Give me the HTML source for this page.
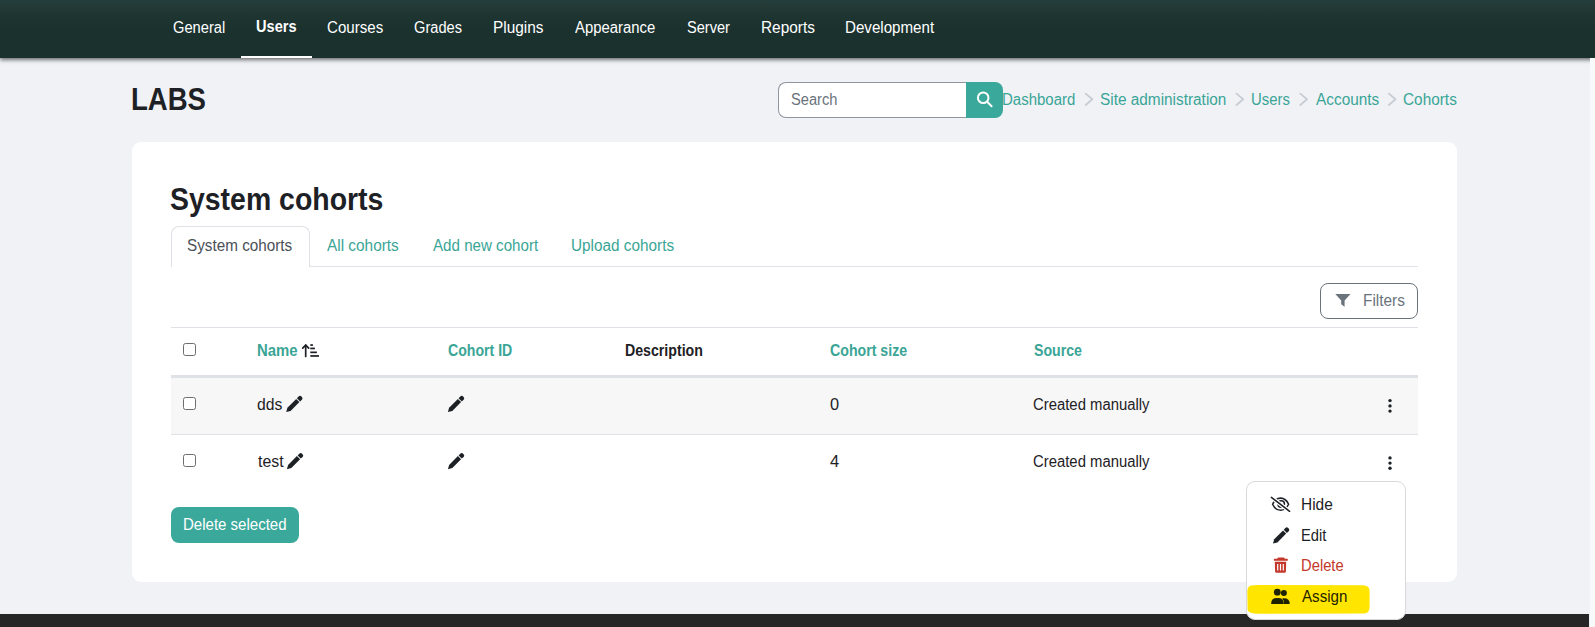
<!DOCTYPE html>
<html><head><meta charset="utf-8">
<style>
*{box-sizing:border-box;margin:0;padding:0}
html,body{width:1595px;height:627px;overflow:hidden}
body{background:#f1f2f6;font-family:"Liberation Sans",sans-serif;color:#1d2125;position:relative}
.t{position:absolute;white-space:nowrap;line-height:40px;transform-origin:0 0}
.b{position:absolute}
svg{position:absolute;overflow:visible}
</style></head>
<body>
<!-- navbar -->
<div class="b" style="left:0;top:0;width:1595px;height:58px;background:linear-gradient(#263e3b 0,#1e3532 14px,#1b312e 30px,#1b312e 58px);box-shadow:0 2px 4px rgba(0,0,0,.55)"></div>
<div class="b" style="left:241px;top:55.5px;width:71px;height:2.5px;background:#fff"></div>

<!-- search -->
<div class="b" style="left:778px;top:82px;width:189px;height:36px;background:#fff;border:1px solid #8f959e;border-right:none;border-radius:8px 0 0 8px"></div>
<div class="b" style="left:966px;top:82px;width:37px;height:36px;background:#3aa89b;border-radius:0 8px 8px 0"></div>
<svg style="left:966px;top:82px" width="37" height="36" viewBox="0 0 37 36">
  <circle cx="17.2" cy="15.8" r="5.3" fill="none" stroke="#fff" stroke-width="2"/>
  <line x1="21.2" y1="19.8" x2="25.6" y2="24.2" stroke="#fff" stroke-width="2" stroke-linecap="round"/>
</svg>
<!-- chevrons -->
<svg style="left:0;top:0" width="1595" height="130" viewBox="0 0 1595 130">
  <g fill="none" stroke="#c8ccd4" stroke-width="1.8" stroke-linecap="round" stroke-linejoin="round">
    <polyline points="1085.6,93.6 1092.3,99.3 1085.6,105"/>
    <polyline points="1236.5,93.6 1243.2,99.3 1236.5,105"/>
    <polyline points="1300.3,93.6 1307,99.3 1300.3,105"/>
    <polyline points="1388.8,93.6 1395.5,99.3 1388.8,105"/>
  </g>
</svg>

<!-- card -->
<div class="b" style="left:132px;top:142px;width:1325px;height:440px;background:#fff;border-radius:9px"></div>

<!-- tabs -->
<div class="b" style="left:171px;top:226px;width:139px;height:41px;background:#fff;border:1px solid #dee2e6;border-bottom:none;border-radius:8px 8px 0 0"></div>
<div class="b" style="left:309px;top:258px;width:1109px;height:9px;border-left:1px solid #dee2e6;border-bottom:1px solid #dee2e6;border-bottom-left-radius:2.5px;background:#fff"></div>

<!-- filters -->
<div class="b" style="left:1320px;top:283px;width:98px;height:36px;border:1px solid #6a737b;border-radius:8px"></div>
<svg style="left:1335px;top:294px" width="16" height="13" viewBox="0 0 16 13">
  <path d="M0.3,0 H15.5 L9.6,6.6 V12.8 L6.2,10.2 V6.6 Z" fill="#6a737b"/>
</svg>

<!-- table -->
<div class="b" style="left:171px;top:327px;width:1247px;height:1px;background:#dee2e6"></div>
<div class="b" style="left:171px;top:378px;width:1247px;height:56px;background:#f7f7f7"></div>
<div class="b" style="left:171px;top:375px;width:1247px;height:3px;background:#dee2e6"></div>
<div class="b" style="left:171px;top:434px;width:1247px;height:1px;background:#dee2e6"></div>

<div class="b" style="left:183px;top:343px;width:13px;height:13px;border:1px solid #6e6e6e;border-radius:2.5px;background:#fff"></div>
<div class="b" style="left:183px;top:397px;width:13px;height:13px;border:1px solid #6e6e6e;border-radius:2.5px;background:#fff"></div>
<div class="b" style="left:183px;top:454px;width:13px;height:13px;border:1px solid #6e6e6e;border-radius:2.5px;background:#fff"></div>

<!-- sort icon -->
<svg style="left:300px;top:342px" width="22" height="17" viewBox="0 0 22 17">
  <g fill="none" stroke="#1d2125" stroke-width="1.7" stroke-linecap="round" stroke-linejoin="round">
    <line x1="5.7" y1="3.2" x2="5.7" y2="14.4"/>
    <polyline points="2.7,6.2 5.7,3.1 8.7,6.2"/>
  </g>
  <g fill="#1d2125">
    <rect x="10.3" y="2.2" width="2.6" height="1.7"/>
    <rect x="10.3" y="5.6" width="4.6" height="1.7"/>
    <rect x="10.3" y="9.5" width="6.6" height="1.7"/>
    <rect x="10.3" y="13.1" width="8.7" height="1.7"/>
  </g>
</svg>

<!-- pencils -->
<svg style="left:0;top:0" width="1595" height="627" viewBox="0 0 1595 627">
  <defs>
    <g id="pen">
      <path d="M0.2,16.8 L1.4,12.4 L10.2,3.6 L13.4,6.8 L4.6,15.6 Z" />
      <path d="M10.9,2.9 L12.6,1.2 Q14,-0.2 15.4,1.2 L15.9,1.7 Q17.3,3.1 15.9,4.5 L14.1,6.1 Z" />
    </g>
  </defs>
  <g fill="#1d2125">
    <use href="#pen" x="286" y="395.3"/>
    <use href="#pen" x="447.7" y="395.3"/>
    <use href="#pen" x="286.7" y="452.5"/>
    <use href="#pen" x="447.7" y="452.5"/>
  </g>
  <!-- kebabs -->
  <g fill="#1d2125">
    <circle cx="1390" cy="400.6" r="1.7"/><circle cx="1390" cy="405.9" r="1.7"/><circle cx="1390" cy="411.1" r="1.7"/>
    <circle cx="1390" cy="457.9" r="1.7"/><circle cx="1390" cy="463.1" r="1.7"/><circle cx="1390" cy="468.3" r="1.7"/>
  </g>
</svg>

<!-- delete selected -->
<div class="b" style="left:171px;top:507px;width:128px;height:36px;background:#3aa89b;border-radius:8px"></div>

<!-- footer -->
<div class="b" style="left:0;top:613.5px;width:1589px;height:14px;background:#262626"></div>
<div class="b" style="left:1589.5px;top:58px;width:6px;height:569px;background:#f8f9fa"></div>

<!-- menu -->
<div class="b" style="left:1246px;top:481px;width:160px;height:139px;background:#fff;border:1px solid #d9d9d9;border-radius:9px"></div>
<!-- highlight -->
<svg style="left:1245px;top:583px" width="128" height="33" viewBox="0 0 128 33">
  <path d="M4,3.5 Q6,1.8 14,2 L118,2.3 Q124.5,2.5 124.6,8 L124.6,25 Q124.4,30.5 118,30.6 L14,30.8 Q4,31 2.6,27 L2.3,8 Q2.3,5 4,3.5 Z" fill="#ffe500"/>
</svg>
<svg style="left:1266px;top:490px" width="30" height="120" viewBox="0 0 30 120">
  <defs><g id="pen2"><path d="M0.2,16.8 L1.4,12.4 L10.2,3.6 L13.4,6.8 L4.6,15.6 Z" /><path d="M10.9,2.9 L12.6,1.2 Q14,-0.2 15.4,1.2 L15.9,1.7 Q17.3,3.1 15.9,4.5 L14.1,6.1 Z" /></g></defs>
  <use href="#pen2" x="6.8" y="36.8" fill="#1d2125"/>
  <!-- eye slash -->
  <g fill="none" stroke="#1d2125" stroke-width="1.55" stroke-linecap="round">
    <path d="M6.6,14.2 C8.6,9.8 11.5,8.1 14.6,8.1 C17.7,8.1 20.6,9.8 22.6,14.2 C20.6,18.6 17.7,20.3 14.6,20.3 C11.5,20.3 8.6,18.6 6.6,14.2 Z"/>
    <circle cx="15.2" cy="14" r="3.2"/>
    <line x1="5.4" y1="7.4" x2="23.6" y2="21.3" stroke="#fff" stroke-width="4"/>
    <line x1="5.4" y1="7.4" x2="23.6" y2="21.3"/>
  </g>
  <!-- trash -->
  <g fill="#c4382b">
    <path d="M11.4,68.2 Q11.6,67.4 12.5,67.4 H17.5 Q18.4,67.4 18.6,68.2 L18.8,68.8 H21.4 Q21.8,68.8 21.8,69.3 V70.3 Q21.8,70.8 21.4,70.8 H8.3 Q7.9,70.8 7.9,70.3 V69.3 Q7.9,68.8 8.3,68.8 H11.2 Z"/>
    <path d="M8.8,71.8 H20.2 L19.9,81.4 Q19.8,82.8 18.4,82.8 H10.6 Q9.2,82.8 9.1,81.4 Z M11.1,74 V80.6 H12.3 V74 Z M13.9,74 V80.6 H15.1 V74 Z M16.7,74 V80.6 H17.9 V74 Z" fill-rule="evenodd"/>
  </g>
  <!-- users -->
  <g fill="#1f2200">
    <circle cx="17.9" cy="102.9" r="3.0"/>
    <path d="M17.3,108.2 Q23.7,107.8 23.8,114.1 H17.9 Q18.4,110.6 16.2,108.6 Z"/>
    <circle cx="11.3" cy="102.2" r="3.4"/>
    <path d="M5.1,113.2 Q5.4,108 10.6,108 H12.3 Q17.5,108 17.8,113.2 Q17.8,114.1 16.9,114.1 H6 Q5.1,114.1 5.1,113.2 Z"/>
  </g>
</svg>

<div class="t" style="left:173.28px;top:8.0px;font-size:15.6px;color:#fff;transform:scaleX(0.9417)">General</div>
<div class="t" style="left:255.78px;top:7.0px;font-size:15.6px;font-weight:bold;color:#fff;transform:scaleX(0.9355)">Users</div>
<div class="t" style="left:327.03px;top:8.0px;font-size:15.6px;color:#fff;transform:scaleX(0.9676)">Courses</div>
<div class="t" style="left:414.38px;top:8.0px;font-size:15.6px;color:#fff;transform:scaleX(0.9384)">Grades</div>
<div class="t" style="left:493.47px;top:8.0px;font-size:15.6px;color:#fff;transform:scaleX(0.9880)">Plugins</div>
<div class="t" style="left:575.42px;top:8.0px;font-size:15.6px;color:#fff;transform:scaleX(0.9538)">Appearance</div>
<div class="t" style="left:686.92px;top:8.0px;font-size:15.6px;color:#fff;transform:scaleX(0.9359)">Server</div>
<div class="t" style="left:760.57px;top:8.0px;font-size:15.6px;color:#fff;transform:scaleX(0.9863)">Reports</div>
<div class="t" style="left:845.00px;top:8.0px;font-size:15.6px;color:#fff;transform:scaleX(0.9696)">Development</div>
<div class="t" style="left:131.46px;top:80.0px;font-size:31px;font-weight:bold;color:#1d2125;transform:scaleX(0.8886)">LABS</div>
<div class="t" style="left:790.62px;top:80.0px;font-size:15.6px;color:#6a737b;transform:scaleX(0.9402)">Search</div>
<div class="t" style="left:1002.31px;top:80.0px;font-size:15.6px;color:#3aa596;transform:scaleX(0.9617)">Dashboard</div>
<div class="t" style="left:1100.28px;top:80.0px;font-size:15.6px;color:#3aa596;transform:scaleX(0.9853)">Site administration</div>
<div class="t" style="left:1250.57px;top:80.0px;font-size:15.6px;color:#3aa596;transform:scaleX(0.9555)">Users</div>
<div class="t" style="left:1315.51px;top:80.0px;font-size:15.6px;color:#3aa596;transform:scaleX(0.9867)">Accounts</div>
<div class="t" style="left:1403.42px;top:80.0px;font-size:15.6px;color:#3aa596;transform:scaleX(0.9855)">Cohorts</div>
<div class="t" style="left:170.44px;top:179.0px;font-size:31.5px;font-weight:bold;color:#1d2125;transform:scaleX(0.9028)">System cohorts</div>
<div class="t" style="left:187.49px;top:226.0px;font-size:15.6px;color:#495057;transform:scaleX(0.9790)">System cohorts</div>
<div class="t" style="left:326.91px;top:226.0px;font-size:15.6px;color:#3aa596;transform:scaleX(0.9857)">All cohorts</div>
<div class="t" style="left:432.92px;top:226.0px;font-size:15.6px;color:#3aa596;transform:scaleX(0.9705)">Add new cohort</div>
<div class="t" style="left:571.14px;top:226.0px;font-size:15.6px;color:#3aa596;transform:scaleX(0.9832)">Upload cohorts</div>
<div class="t" style="left:1363.27px;top:281.0px;font-size:15.6px;color:#6a737b;transform:scaleX(0.9872)">Filters</div>
<div class="t" style="left:256.99px;top:331.0px;font-size:15.6px;font-weight:bold;color:#3aa596;transform:scaleX(0.9557)">Name</div>
<div class="t" style="left:447.78px;top:331.0px;font-size:15.6px;font-weight:bold;color:#3aa596;transform:scaleX(0.9048)">Cohort ID</div>
<div class="t" style="left:625.05px;top:331.0px;font-size:15.6px;font-weight:bold;color:#1d2125;transform:scaleX(0.9083)">Description</div>
<div class="t" style="left:829.88px;top:331.0px;font-size:15.6px;font-weight:bold;color:#3aa596;transform:scaleX(0.9085)">Cohort size</div>
<div class="t" style="left:1033.58px;top:331.0px;font-size:15.6px;font-weight:bold;color:#3aa596;transform:scaleX(0.9062)">Source</div>
<div class="t" style="left:257.11px;top:385.0px;font-size:15.6px;color:#1d2125;transform:scaleX(1.0064)">dds</div>
<div class="t" style="left:829.51px;top:385.0px;font-size:15.6px;color:#1d2125;transform:scaleX(1.0492)">0</div>
<div class="t" style="left:1033.44px;top:385.0px;font-size:15.6px;color:#1d2125;transform:scaleX(0.9536)">Created manually</div>
<div class="t" style="left:257.50px;top:442.0px;font-size:15.6px;color:#1d2125;transform:scaleX(1.0177)">test</div>
<div class="t" style="left:829.77px;top:442.0px;font-size:15.6px;color:#1d2125;transform:scaleX(1.0599)">4</div>
<div class="t" style="left:1033.44px;top:442.0px;font-size:15.6px;color:#1d2125;transform:scaleX(0.9536)">Created manually</div>
<div class="t" style="left:183.30px;top:505.0px;font-size:15.6px;color:#fff;transform:scaleX(0.9636)">Delete selected</div>
<div class="t" style="left:1300.87px;top:485.0px;font-size:15.6px;color:#1d2125;transform:scaleX(0.9905)">Hide</div>
<div class="t" style="left:1300.93px;top:516.0px;font-size:15.6px;color:#1d2125;transform:scaleX(0.9430)">Edit</div>
<div class="t" style="left:1301.13px;top:546.0px;font-size:15.6px;color:#c4382b;transform:scaleX(0.9470)">Delete</div>
<div class="t" style="left:1302.12px;top:577.0px;font-size:15.6px;color:#1f2200;transform:scaleX(0.9702)">Assign</div>
</body></html>
